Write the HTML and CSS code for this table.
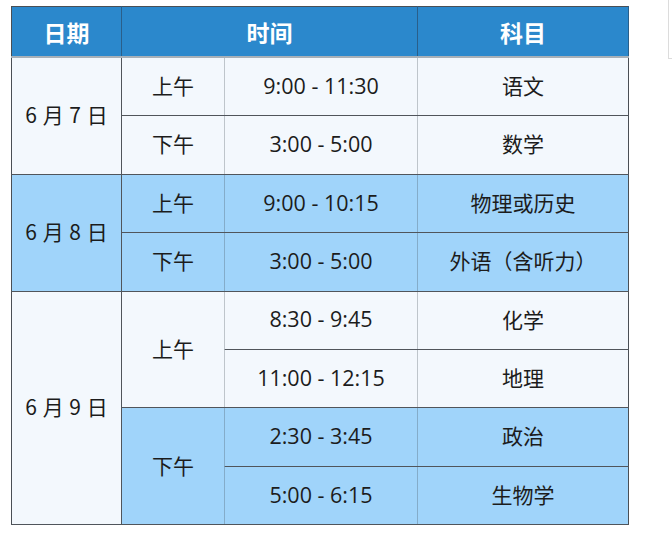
FILE: index.html
```html
<!DOCTYPE html>
<html lang="zh-CN">
<head>
<meta charset="utf-8">
<title>考试时间安排</title>
<link rel="stylesheet" href="styles.css">
</head>
<body>
<div class="page">
  <table class="schedule">
    <colgroup>
      <col class="c-date">
      <col class="c-half">
      <col class="c-time">
      <col class="c-subj">
    </colgroup>
    <thead>
      <tr>
        <th class="h-date">日期</th>
        <th colspan="2" class="h-time">时间</th>
        <th class="h-subj">科目</th>
      </tr>
    </thead>
    <tbody>
      <tr class="light">
        <td rowspan="2" class="date">6 月 7 日</td>
        <td class="half">上午</td>
        <td class="time">9:00 - 11:30</td>
        <td class="subj">语文</td>
      </tr>
      <tr class="light">
        <td class="half">下午</td>
        <td class="time">3:00 - 5:00</td>
        <td class="subj">数学</td>
      </tr>
      <tr class="blue">
        <td rowspan="2" class="date">6 月 8 日</td>
        <td class="half">上午</td>
        <td class="time">9:00 - 10:15</td>
        <td class="subj">物理或历史</td>
      </tr>
      <tr class="blue">
        <td class="half">下午</td>
        <td class="time">3:00 - 5:00</td>
        <td class="subj">外语（含听力）</td>
      </tr>
      <tr class="light">
        <td rowspan="4" class="date">6 月 9 日</td>
        <td rowspan="2" class="half">上午</td>
        <td class="time">8:30 - 9:45</td>
        <td class="subj">化学</td>
      </tr>
      <tr class="light">
        <td class="time">11:00 - 12:15</td>
        <td class="subj">地理</td>
      </tr>
      <tr class="blue">
        <td rowspan="2" class="half">下午</td>
        <td class="time">2:30 - 3:45</td>
        <td class="subj">政治</td>
      </tr>
      <tr class="blue">
        <td class="time">5:00 - 6:15</td>
        <td class="subj">生物学</td>
      </tr>
    </tbody>
  </table>
  <div class="side-box"></div>
</div>
</body>
</html>
```

FILE: styles.css
```css
html, body {
  margin: 0;
  padding: 0;
  background: #ffffff;
}

.page {
  display: flex;
  align-items: flex-start;
  gap: 39px;
  padding: 6px 0 0 11px;
}

.schedule {
  border-collapse: collapse;
  table-layout: fixed;
  width: 617px;
  font-family: "Noto Sans CJK SC", "Noto Sans", sans-serif;
  font-size: 21px;
  color: #1c1c1c;
  border: 1px solid #4a4f55;
}

.c-date { width: 110px; }
.c-half { width: 103px; }
.c-time { width: 193px; }
.c-subj { width: 211px; }

.schedule th {
  background: #2b88cc;
  color: #ffffff;
  font-weight: 700;
  font-size: 23px;
  height: 49px;
  padding: 0;
  text-align: center;
  border-bottom: 2px solid #a7b0b8;
  border-right: 1px solid #2a5f8a;
}

.schedule td {
  height: 55.4px;
  padding: 0 0 2px 0;
  text-align: center;
  vertical-align: middle;
  border-top: 1px solid #50555b;
  border-bottom: 1px solid #50555b;
  line-height: 1.2;
}

.schedule td.date {
  border-right: 1px solid #50555b;
  word-spacing: 1px;
}

.schedule td.half {
  border-right: 1px solid rgba(70, 80, 90, 0.3);
}

.schedule td.time {
  border-right: 1px solid rgba(70, 80, 90, 0.3);
  font-family: "Open Sans", "Noto Sans", sans-serif;
  font-size: 21.5px;
}

.light td { background: #f3f8fd; }
.blue td { background: #a0d4fa; }

.side-box {
  width: 20px;
  height: 59px;
  margin-top: -7px;
  border: 1px solid #dcdcdc;
  border-right: none;
  border-top: none;
}
```
